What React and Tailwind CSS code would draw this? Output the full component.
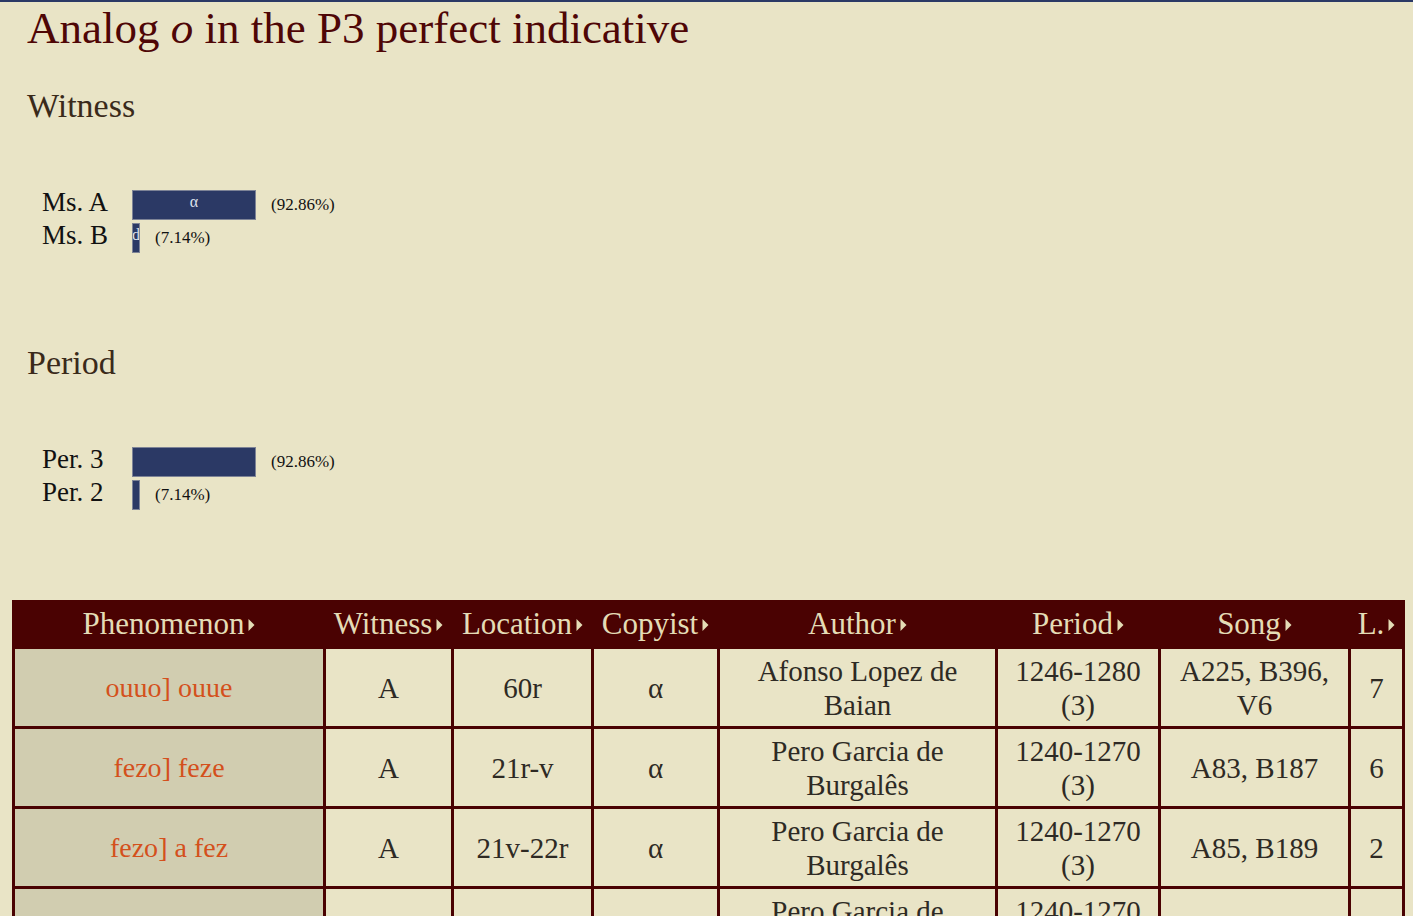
import React from 'react';

const witnessData = [
    { label: 'Ms. A', pct: '(92.86%)', width: 124, inner: 'α' },
    { label: 'Ms. B', pct: '(7.14%)', width: 8, inner: 'd' },
];

const periodData = [
    { label: 'Per. 3', pct: '(92.86%)', width: 124, inner: '' },
    { label: 'Per. 2', pct: '(7.14%)', width: 8, inner: '' },
];

const columns = [
    { name: 'Phenomenon', w: 'w-[311px]' },
    { name: 'Witness', w: 'w-[128px]' },
    { name: 'Location', w: 'w-[140px]' },
    { name: 'Copyist', w: 'w-[126px]' },
    { name: 'Author', w: 'w-[278px]' },
    { name: 'Period', w: 'w-[163px]' },
    { name: 'Song', w: 'w-[190px]' },
    { name: 'L.', w: 'w-[54px]' },
];

const rows = [
    { lemma: 'ouuo', reading: 'ouue', witness: 'A', location: '60r', copyist: 'α', author: 'Afonso Lopez de Baian', period: '1246-1280 (3)', song: 'A225, B396, V6', line: '7' },
    { lemma: 'fezo', reading: 'feze', witness: 'A', location: '21r-v', copyist: 'α', author: 'Pero Garcia de Burgalês', period: '1240-1270 (3)', song: 'A83, B187', line: '6' },
    { lemma: 'fezo', reading: 'a fez', witness: 'A', location: '21v-22r', copyist: 'α', author: 'Pero Garcia de Burgalês', period: '1240-1270 (3)', song: 'A85, B189', line: '2' },
    { lemma: 'fezo', reading: 'fez', witness: 'A', location: '22r', copyist: 'α', author: 'Pero Garcia de Burgalês', period: '1240-1270 (3)', song: 'A86, B190', line: '1' },
];

const SortArrow = () => (
    <svg width="7" height="14" viewBox="0 0 7 14" className="inline-block ml-[4px] mb-[3px]">
        <polygon points="0.5,1 6.5,7 0.5,13" fill="#e4dcb6" />
    </svg>
);

const BarChart = ({ data }) => (
    <div className="pl-[15px]">
        {data.map((d) => (
            <div key={d.label} className="flex items-center h-[33px]">
                <div className="w-[90px] text-[27px] leading-[30px] pb-[5px] text-[#111]">{d.label}</div>
                <div
                    className="h-[30px] bg-[#2b3965] border border-[#7d8396] flex justify-center overflow-hidden text-[16px] leading-[22px] text-[#dfe2ec]"
                    style={{ width: d.width }}
                >
                    {d.inner}
                </div>
                <div className="ml-[15px] text-[17px] text-[#111]">{d.pct}</div>
            </div>
        ))}
    </div>
);

const cell = 'border-[3px] border-[#4a0202] text-center align-middle pt-[5px] pb-[4px]';

const App = () => {
    return (
        <div className="min-h-screen bg-[#e9e4c6] border-t-2 border-[#2b3965] font-['Liberation_Serif',serif]">
            <div className="px-[12px]">
                <div className="pl-[15px]">
                    {/* Title */}
                    <h1 className="text-[45px] leading-[52px] text-[#4f0606]">
                        Analog <i>o</i> in the P3 perfect indicative
                    </h1>

                    {/* Witness chart */}
                    <h2 className="mt-[32px] text-[34px] leading-[40px] text-[#3a2a1a]">Witness</h2>
                    <div className="mt-[62px]">
                        <BarChart data={witnessData} />
                    </div>

                    {/* Period chart */}
                    <h2 className="mt-[89px] text-[34px] leading-[40px] text-[#3a2a1a]">Period</h2>
                    <div className="mt-[62px]">
                        <BarChart data={periodData} />
                    </div>
                </div>

                {/* Results table */}
                <table className="mt-[89px] w-[1390px] table-fixed border-collapse border-[3px] border-[#4a0202] text-[29px] leading-[34px]">
                    <thead>
                        <tr className="bg-[#4a0202] text-[#e4dcb6]">
                            {columns.map((c) => (
                                <th key={c.name} className={`${c.w} font-normal pt-[4px] pb-[5px] text-center text-[31px] border-[3px] border-[#4a0202] whitespace-nowrap`}>
                                    {c.name}
                                    <SortArrow />
                                </th>
                            ))}
                        </tr>
                    </thead>
                    <tbody className="text-[#2e2a24]">
                        {rows.map((r, i) => (
                            <tr key={i}>
                                <td className={`${cell} bg-[#d1cdb0] px-[10px] text-[28px] text-[#d4501c]`}>
                                    {r.lemma}] {r.reading}
                                </td>
                                <td className={`${cell} px-[10px]`}>{r.witness}</td>
                                <td className={`${cell} px-[10px]`}>{r.location}</td>
                                <td className={`${cell} px-[10px]`}>{r.copyist}</td>
                                <td className={`${cell} px-[20px]`}>{r.author}</td>
                                <td className={`${cell} px-[10px]`}>{r.period}</td>
                                <td className={`${cell} px-[12px]`}>{r.song}</td>
                                <td className={`${cell} px-[4px]`}>{r.line}</td>
                            </tr>
                        ))}
                    </tbody>
                </table>
                <div className="h-[40px]" />
            </div>
        </div>
    );
};

export default App;
